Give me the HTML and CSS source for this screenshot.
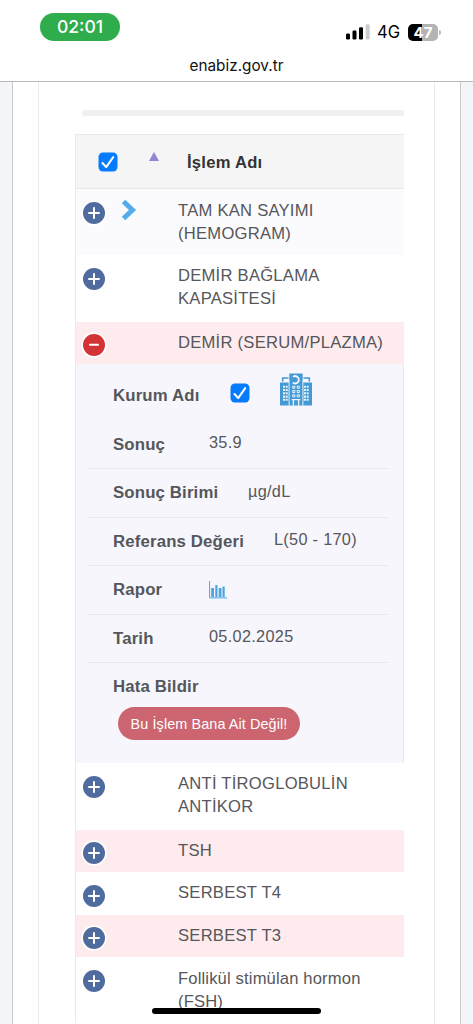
FILE: index.html
```html
<!DOCTYPE html>
<html lang="tr">
<head>
<meta charset="utf-8">
<title>enabiz.gov.tr</title>
<link rel="stylesheet" href="styles.css">
</head>
<body>
<svg class="defs" aria-hidden="true">
  <symbol id="plus" viewBox="0 0 26 26"><circle cx="13" cy="13" r="12.7" fill="#fff"/><circle cx="13" cy="13" r="11" fill="#506b9e"/><path d="M8 13h10M13 8v10" stroke="#fff" stroke-width="2" stroke-linecap="round"/></symbol>
  <symbol id="minus" viewBox="0 0 26 26"><circle cx="13" cy="13" r="12.7" fill="#fff"/><circle cx="13" cy="13" r="11" fill="#d33335"/><path d="M9 12.8h8" stroke="#fff" stroke-width="2" stroke-linecap="round"/></symbol>
  <symbol id="check" viewBox="0 0 20 20"><rect x=".5" y=".5" width="19" height="19" rx="4.5" fill="#057bfd"/><path d="M4.5 11l3.7 4.1 7-10" fill="none" stroke="#fff" stroke-width="2" stroke-linecap="round" stroke-linejoin="round"/></symbol>
</svg>
<div class="screen">
  <header class="top">
    <div class="status">
      <span class="clock">02:01</span>
      <div class="signals">
        <svg class="bars" viewBox="0 0 25 16"><rect y="9.5" width="4" height="6" rx="1.2"/><rect x="6.5" y="6.5" width="4" height="9" rx="1.2"/><rect x="13" y="3.3" width="4" height="12.2" rx="1.2"/><rect x="19.7" y=".2" width="4" height="15.3" rx="1.2" fill="#ccc"/></svg>
        <span class="net">4G</span>
        <span class="battery"><span class="level">47</span><span class="tip"></span></span>
      </div>
    </div>
    <div class="address">enabiz.gov.tr</div>
  </header>
  <main class="page">
    <div class="sheet">
      <div class="panel">
        <div class="scrollbar"></div>
        <div class="table">
          <div class="head">
            <svg class="headcheck"><use href="#check"/></svg>
            <span class="sort"></span>
            <span class="title">İşlem Adı</span>
          </div>
          <div class="row tint">
            <svg class="toggle"><use href="#plus"/></svg>
            <span class="extra"><svg class="chevron" viewBox="0 0 16 22"><path d="M2.5 2.5L11.5 11l-9 8.5" fill="none" stroke="#53ade9" stroke-width="5"/></svg></span>
            <span class="name">TAM KAN SAYIMI<br>(HEMOGRAM)</span>
          </div>
          <div class="row second">
            <svg class="toggle"><use href="#plus"/></svg><span class="extra"></span>
            <span class="name">DEMİR BAĞLAMA<br>KAPASİTESİ</span>
          </div>
          <div class="row single alert">
            <svg class="toggle"><use href="#minus"/></svg><span class="extra"></span>
            <span class="name">DEMİR (SERUM/PLAZMA)</span>
          </div>
          <div class="details">
            <div class="item first"><span class="label kurum">Kurum Adı</span>
              <svg class="rowcheck"><use href="#check"/></svg>
              <svg class="hospital" viewBox="0 0 32 33">
                <path d="M0 9.5h9v23H0zM23 9.5h9v23h-9zM9.3.5h13.4v32H9.3z" fill="#439ad5"/>
                <path d="M2.7 8.5V5h5.8M29.3 8.5V5h-5.8" fill="none" stroke="#439ad5" stroke-width="1.6"/>
                <path d="M9 7.5v25M23 7.5v25" stroke="#e4f1fa" stroke-width=".8"/>
                <path d="M13.6 3.4a3.7 3.7 0 1 1-.2 6.6" fill="none" stroke="#f7f6fc" stroke-width="1.8" stroke-linecap="round"/>
                <g fill="none" stroke="#e9f3fb" stroke-width="1.5"><path d="M3 13.7h5M3 17h5M3 20.3h5M3 23.6h5M3 26.8h5M24 13.7h5M24 17h5M24 20.3h5M24 23.6h5M24 26.8h5" stroke-width="2.1" stroke-dasharray="2 .7"/><path d="M12.7 13.2h2.2v2h-2.2zM17.2 13.2h2.2v2h-2.2zM12.7 17.5h2.2v2h-2.2zM17.2 17.5h2.2v2h-2.2zM12.7 21.8h2.2v2h-2.2zM17.2 21.8h2.2v2h-2.2z" stroke-width="1"/><path d="M11.7 26.6h8.6M13.4 27v5.5M18.6 27v5.5" stroke-width="1.3"/></g>
              </svg>
            </div>
            <div class="item"><span class="label">Sonuç</span><span class="value">35.9</span></div>
            <div class="item"><span class="label birim">Sonuç Birimi</span><span class="value">µg/dL</span></div>
            <div class="item"><span class="label ref">Referans Değeri</span><span class="value">L(50 - 170)</span></div>
            <div class="item"><span class="label">Rapor</span><svg class="chart" viewBox="0 0 18 18"><path d="M.6 0v16.9H18" fill="none" stroke="#4aa5e3" stroke-width="1"/><path d="M2.2 7h2.8v9H2.2zM6.3 4h2.2v12H6.3zM9.7 7h2.8v9H9.7zM13.5 5.5h2.2V16h-2.2z" fill="#4aa5e3"/></svg></div>
            <div class="item"><span class="label">Tarih</span><span class="value">05.02.2025</span></div>
            <div class="report"><span class="label">Hata Bildir</span><button class="deny">Bu İşlem Bana Ait Değil!</button></div>
          </div>
          <div class="row after">
            <svg class="toggle"><use href="#plus"/></svg><span class="extra"></span>
            <span class="name">ANTİ TİROGLOBULİN<br>ANTİKOR</span>
          </div>
          <div class="row single alert">
            <svg class="toggle"><use href="#plus"/></svg><span class="extra"></span><span class="name">TSH</span>
          </div>
          <div class="row single plain">
            <svg class="toggle"><use href="#plus"/></svg><span class="extra"></span><span class="name">SERBEST T4</span>
          </div>
          <div class="row single alert">
            <svg class="toggle"><use href="#plus"/></svg><span class="extra"></span><span class="name">SERBEST T3</span>
          </div>
          <div class="row last">
            <svg class="toggle"><use href="#plus"/></svg><span class="extra"></span>
            <span class="name mixed">Follikül stimülan hormon<br>(FSH)</span>
          </div>
        </div>
      </div>
    </div>
  </main>
  <div class="home"></div>
</div>
</body>
</html>
```

FILE: styles.css
```css
* { box-sizing: border-box; }
body { margin: 0; background: #fff; font-family: "Liberation Sans", Arial, sans-serif; }
svg { display: block; flex: none; }
.defs { position: absolute; width: 0; height: 0; }
.screen { position: relative; width: 473px; height: 1024px; overflow: hidden; display: flex; flex-direction: column; }

.top { height: 82px; flex: none; border-bottom: 1px solid #b9b9b9; background: #fff; font-family: Inter, sans-serif; }
.status { height: 54px; padding: 13px 32px 0 40px; display: flex; justify-content: space-between; align-items: flex-start; }
.clock { width: 80px; height: 28px; border-radius: 14px; background: #2fac4c; color: #fff; font-size: 17.6px; font-weight: 500; line-height: 28px; text-align: center; letter-spacing: 0; }
.signals { display: flex; align-items: center; height: 20px; margin-top: 9px; }
.bars { width: 25px; height: 16px; margin-right: 6px; }
.net { width: 31px; font-size: 16.6px; font-weight: 400; line-height: 20px; letter-spacing: .1px; }
.battery { display: flex; align-items: center; gap: 1px; }
.level { width: 30px; height: 17px; border-radius: 5px; background: linear-gradient(90deg, #000 47%, #b4b4b4 47%); color: #fff; font-size: 15px; font-weight: 700; line-height: 17px; text-align: center; }
.tip { width: 2px; height: 5px; border-radius: 0 3px 3px 0; background: #bbb; }
.address { height: 22px; font-size: 15.3px; line-height: 23px; text-align: center; color: #111; }

.page { flex: 1; min-height: 0; padding: 0 12px; background: #f4f5f8; }
.sheet { height: 100%; padding: 0 25px; background: #fff; border-left: 1px solid #c9c8cb; border-right: 1px solid #c9c8cb; }
.panel { height: 100%; padding: 28px 30px 0 36px; border-left: 1px solid #ebebec; border-right: 1px solid #ebebec; }
.scrollbar { height: 6px; margin: 0 0 18px 7px; border-radius: 3px; background: #f0f0f0; }
.table { width: 329px; border-left: 1px solid #e9e9ee; }

.head { height: 55px; padding: 0 0 0 22px; display: flex; align-items: center; background: #f5f5f5; border-top: 1px solid #e8e8e8; border-bottom: 1px solid #e7e7e8; }
.headcheck { width: 20px; height: 20px; }
.sort { width: 10px; height: 9px; margin: -10px 28px 0 31px; background: #9583d5; clip-path: polygon(50% 0, 100% 100%, 0 100%); }
.title { font-size: 16.6px; font-weight: 700; letter-spacing: .25px; color: #333; margin-top: 2px; }

.row { height: 66px; padding: 10px 0 0 5px; display: flex; align-items: flex-start; background: #fff; }
.tint { background: #fbfbfd; }
.second { height: 67px; padding-top: 9px; }
.second .toggle { margin-top: 2px; }
.single { height: 43px; padding-top: 9px; }
.single .toggle { margin-top: 2px; }
.alert { background: #feebed; height: 42px; }
.alert .toggle { margin-top: 1px; }
.toggle { width: 26px; height: 26px; margin-top: 1px; }
.extra { width: 71px; padding: 0 0 0 14px; }
.chevron { width: 16px; height: 22px; }
.name { font-size: 16.6px; line-height: 23px; letter-spacing: .25px; color: #56565b; white-space: nowrap; }
.mixed { letter-spacing: .15px; }
.after { height: 67px; padding-top: 9px; }
.after .toggle { margin-top: 2px; }

.details { height: 399px; padding: 7px 15px 0 12px; background: #f7f6fc; border-right: 1px solid #e8e7ec; }
.item { height: 48.5px; padding: 0 0 0 25px; display: flex; align-items: center; border-bottom: 1px solid #e9e8ef; }
.first { height: 49.5px; border-bottom-color: #f4f3f9; }
.label { width: 96px; flex: none; font-size: 16.8px; font-weight: 700; line-height: 23px; letter-spacing: .15px; color: #55565b; white-space: nowrap; }
.kurum { width: 117px; }
.birim { width: 135px; }
.ref { width: 161px; }
.value { font-size: 16.3px; line-height: 23px; letter-spacing: .3px; color: #56565b; margin-top: -3px; white-space: nowrap; }
.rowcheck { width: 20px; height: 20px; margin-top: -4px; }
.hospital { width: 32px; height: 33px; margin: -11px 0 0 30px; }
.chart { width: 18px; height: 18px; }
.report { padding: 12px 0 0 25px; display: flex; flex-direction: column; align-items: flex-start; }
.deny { width: 182px; height: 33px; margin: 9px 0 0 5px; padding: 0; border: 0; border-radius: 17px; background: #cc6570; color: #fff; font: 14.4px "Liberation Sans", Arial, sans-serif; letter-spacing: .1px; white-space: nowrap; }

.home { position: absolute; left: 152px; bottom: 10px; width: 169px; height: 6px; border-radius: 3px; background: #000; }
```
